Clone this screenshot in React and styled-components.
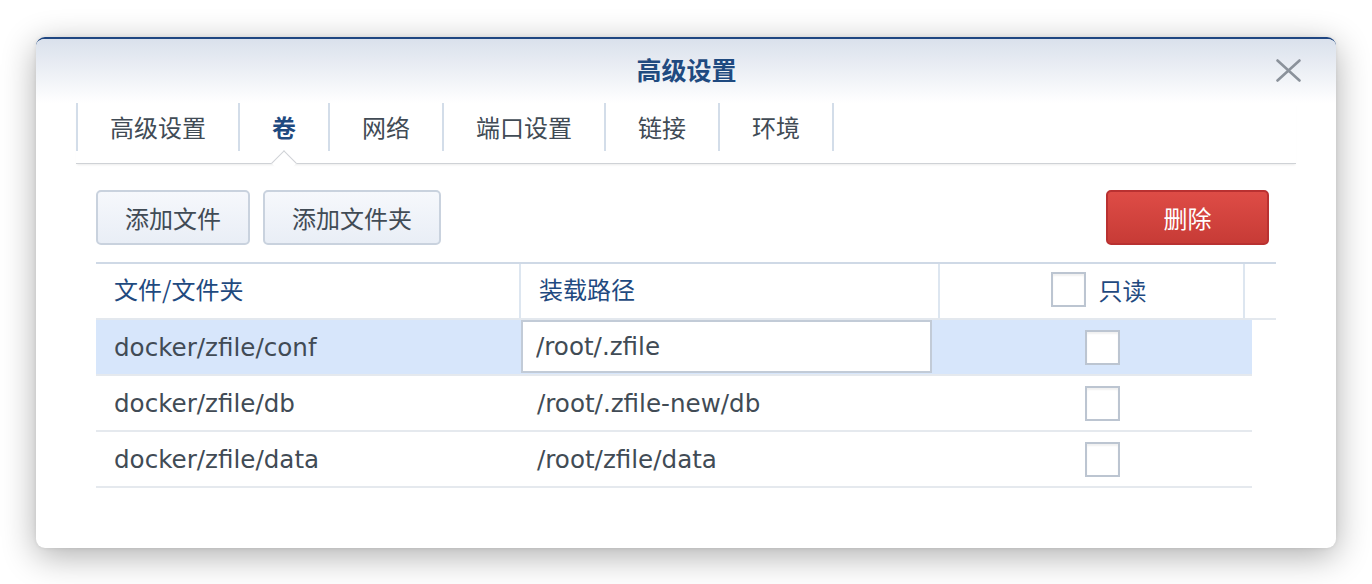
import React from 'react';
import styled, { createGlobalStyle } from 'styled-components';

const GlobalStyle = createGlobalStyle`
  html, body {
    margin: 0;
    padding: 0;
    background: #ffffff;
  }
  body {
    font-family: "DejaVu Sans", "Noto Sans CJK SC", sans-serif;
    color: #414b55;
  }
`;

const tabs = ['高级设置', '卷', '网络', '端口设置', '链接', '环境'];

const rows = [
  { file: 'docker/zfile/conf', mount: '/root/.zfile', selected: true },
  { file: 'docker/zfile/db', mount: '/root/.zfile-new/db' },
  { file: 'docker/zfile/data', mount: '/root/zfile/data' },
];

export default function App() {
  return (
    <Page>
      <GlobalStyle />
      <Dialog>
        <Header>
          <span />
          <Title>高级设置</Title>
          <CloseButton aria-label="close">
            <svg width="25" height="23" viewBox="0 0 25 23">
              <path d="M1.5 1.5 L23.5 21.5 M23.5 1.5 L1.5 21.5" stroke="#8b929b" strokeWidth="2.6" strokeLinecap="round" fill="none" />
            </svg>
          </CloseButton>
        </Header>

        <TabBar>
          {tabs.map((t, i) => (
            <Tab key={t} active={i === 1}>{t}</Tab>
          ))}
        </TabBar>

        <Toolbar>
          <ButtonGroup>
            <Button>添加文件</Button>
            <Button>添加文件夹</Button>
          </ButtonGroup>
          <DangerButton>删除</DangerButton>
        </Toolbar>

        <Table>
          <HeadRow>
            <HeadCell>文件/文件夹</HeadCell>
            <HeadCell>装载路径</HeadCell>
            <HeadCell center>
              <Checkbox />
              <span>只读</span>
            </HeadCell>
            <HeadCell />
          </HeadRow>
          {rows.map((r) => (
            <Row key={r.file} selected={r.selected}>
              <Cell>{r.file}</Cell>
              <Cell editing={r.selected}>
                {r.selected ? <PathInput defaultValue={r.mount} /> : r.mount}
              </Cell>
              <Cell center>
                <Checkbox />
              </Cell>
            </Row>
          ))}
        </Table>
      </Dialog>
    </Page>
  );
}

const Page = styled.div`
  padding: 37px 36px 0 36px;
  height: 584px;
  box-sizing: border-box;
`;

const Dialog = styled.div`
  width: 1300px;
  height: 511px;
  box-sizing: border-box;
  background: #fff;
  border-top: 2px solid #1f4681;
  border-radius: 9px;
  box-shadow: 0 8px 34px rgba(0, 0, 0, 0.32), 0 0 4px rgba(0, 0, 0, 0.08);
  overflow: hidden;
`;

const Header = styled.div`
  height: 64px;
  display: grid;
  grid-template-columns: 1fr auto 1fr;
  align-items: center;
  padding: 0 35px 0 36px;
  background: linear-gradient(#dae1ec 0%, #eef1f6 55%, #ffffff 100%);
`;

const Title = styled.div`
  font-family: "Noto Sans CJK SC", sans-serif;
  font-size: 25px;
  font-weight: 700;
  color: #1f4a80;
  padding-bottom: 5px;
`;

const CloseButton = styled.button`
  justify-self: end;
  background: none;
  border: none;
  padding: 0 0 2px 0;
  display: flex;
  cursor: pointer;
`;

const TabBar = styled.div`
  margin: 0 40px;
  display: flex;
  padding-bottom: 12px;
  border-bottom: 1px solid #cfd2d6;
  box-shadow: 0 2px 2px -1px rgba(0, 0, 0, 0.08);
`;

const Tab = styled.div`
  position: relative;
  height: 48px;
  line-height: 48px;
  padding: 0 32px;
  font-family: "Noto Sans CJK SC", sans-serif;
  font-size: 24px;
  font-weight: ${(p) => (p.active ? 700 : 400)};
  color: ${(p) => (p.active ? '#1f4a80' : '#414b55')};
  border-left: 2px solid #d3dde9;

  &:last-child {
    border-right: 2px solid #d3dde9;
  }

  ${(p) =>
    p.active &&
    `
    &::after {
      content: '';
      position: absolute;
      left: 50%;
      bottom: -21px;
      width: 17px;
      height: 17px;
      margin-left: -9px;
      background: #fff;
      border-left: 1px solid #cfd2d6;
      border-top: 1px solid #cfd2d6;
      transform: rotate(45deg);
    }
  `}
`;

const Toolbar = styled.div`
  display: flex;
  justify-content: space-between;
  align-items: center;
  padding: 26px 67px 0 60px;
`;

const ButtonGroup = styled.div`
  display: flex;
  gap: 13px;
`;

const Button = styled.button`
  height: 55px;
  padding: 0 27px;
  font-family: "Noto Sans CJK SC", sans-serif;
  font-size: 24px;
  color: #414b55;
  background: linear-gradient(#f6f8fc, #e9eef6);
  border: 2px solid #c9d2de;
  border-radius: 5px;
`;

const DangerButton = styled(Button)`
  width: 163px;
  color: #ffffff;
  background: linear-gradient(#de4c46, #c73b36);
  border-color: #b93131;
`;

const Table = styled.div`
  margin: 17px 60px 0 60px;
  border-top: 2px solid #cfd9e6;
`;

const HeadRow = styled.div`
  display: grid;
  grid-template-columns: 423px 419px 305px 33px;
  height: 54px;
  border-bottom: 2px solid #e3e8ee;
`;

const HeadCell = styled.div`
  display: flex;
  align-items: center;
  justify-content: ${(p) => (p.center ? 'center' : 'flex-start')};
  gap: 13px;
  padding: ${(p) => (p.center ? '0 0 4px 14px' : '0 18px 5px 18px')};
  font-family: "Noto Sans CJK SC", sans-serif;
  font-size: 24px;
  color: #1f4a80;

  & + & {
    border-left: 2px solid #dde6f0;
  }
`;

const Row = styled.div`
  display: grid;
  grid-template-columns: 423px 419px 314px;
  width: 1156px;
  height: 56px;
  box-sizing: border-box;
  border-bottom: 2px solid #e5e9ee;
  background: ${(p) => (p.selected ? '#d7e6fb' : 'transparent')};
`;

const Cell = styled.div`
  display: flex;
  align-items: center;
  justify-content: ${(p) => (p.center ? 'center' : 'flex-start')};
  padding: ${(p) => (p.editing ? '0 6px 1px 2px' : p.center ? '0 0 0 14px' : '0 18px')};
  font-size: 24.6px;
  color: #414b55;
  white-space: nowrap;
`;

const PathInput = styled.input`
  width: 411px;
  height: 53px;
  box-sizing: border-box;
  padding: 0 13px;
  font-family: "DejaVu Sans", sans-serif;
  font-size: 24.6px;
  color: #414b55;
  background: #fff;
  border: 2px solid #c2cbd7;
  border-radius: 0;
  outline: none;
`;

const Checkbox = styled.span`
  display: inline-block;
  width: 35px;
  height: 35px;
  box-sizing: border-box;
  background: #fff;
  border: 2px solid #bcc5d1;
  box-shadow: inset 0 2px 2px rgba(0, 0, 0, 0.06);
  flex-shrink: 0;
`;
